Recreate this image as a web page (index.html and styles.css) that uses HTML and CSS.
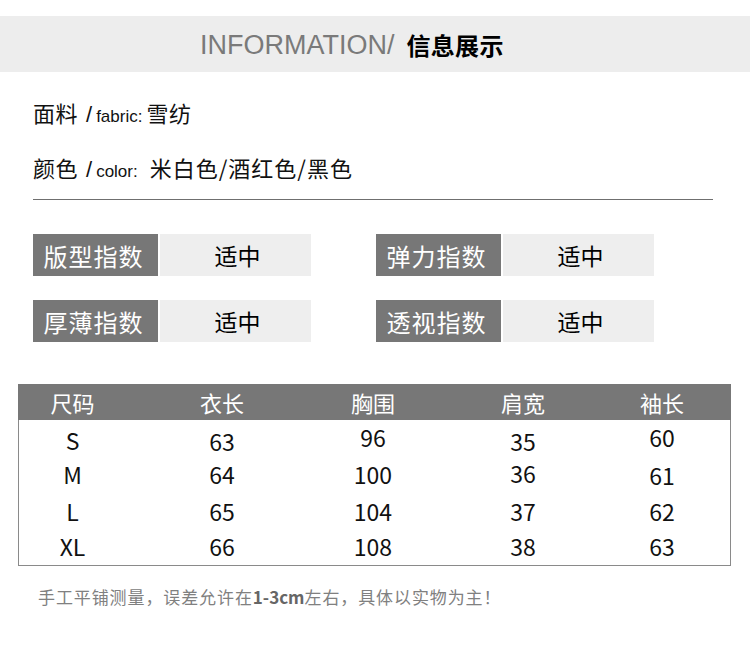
FILE: index.html
```html
<!DOCTYPE html>
<html lang="zh">
<head>
<meta charset="utf-8">
<title>INFORMATION</title>
<link rel="stylesheet" href="styles.css">
</head>
<body>
<div class="banner">
  <span class="banner-en">INFORMATION/</span>
  <span class="banner-cn">信息展示</span>
</div>

<div class="specs">
  <div class="spec-line"><span class="cn">面料</span><span class="slash">/</span><span class="en">fabric:</span><span class="cn">雪纺</span></div>
  <div class="spec-line second"><span class="cn">颜色</span><span class="slash">/</span><span class="en">color:</span><span class="cn gap">米白色/酒红色/黑色</span></div>
</div>

<div class="rule"></div>

<div class="indices">
  <div class="index"><div class="idx-label">版型指数</div><div class="idx-value">适中</div></div>
  <div class="index"><div class="idx-label">弹力指数</div><div class="idx-value">适中</div></div>
  <div class="index"><div class="idx-label">厚薄指数</div><div class="idx-value">适中</div></div>
  <div class="index"><div class="idx-label">透视指数</div><div class="idx-value">适中</div></div>
</div>

<div class="size-table">
  <div class="trow thead">
    <div>尺码</div><div>衣长</div><div>胸围</div><div>肩宽</div><div>袖长</div>
  </div>
  <div class="tbody">
    <div class="trow r1">
      <div>S</div><div class="dn">63</div><div class="up">96</div><div class="dn">35</div><div class="up">60</div>
    </div>
    <div class="trow r2">
      <div>M</div><div>64</div><div>100</div><div class="up1">36</div><div class="dn">61</div>
    </div>
    <div class="trow r3">
      <div>L</div><div>65</div><div>104</div><div>37</div><div>62</div>
    </div>
    <div class="trow r4">
      <div>XL</div><div>66</div><div>108</div><div>38</div><div>63</div>
    </div>
  </div>
</div>

<p class="note">手工平铺测量，误差允许在<b>1-3cm</b>左右，具体以实物为主！</p>
</body>
</html>
```

FILE: styles.css
```css
* { box-sizing: border-box; }

body {
  margin: 0;
  width: 750px;
  background: #ffffff;
  font-family: "Noto Sans CJK SC", "Liberation Sans", sans-serif;
  color: #111111;
}

.banner {
  margin-top: 16px;
  height: 56px;
  background: #ededed;
  display: flex;
  align-items: center;
  padding-left: 200px;
  padding-top: 2px;
}

.banner-en {
  font-family: "Liberation Sans", Arial, sans-serif;
  font-size: 27px;
  color: #7a7a7a;
  letter-spacing: 0;
  line-height: 1;
}

.banner-cn {
  margin-left: 12px;
  font-family: "Noto Sans CJK SC", sans-serif;
  font-weight: 700;
  font-size: 24px;
  letter-spacing: 0.3px;
  color: #000000;
  line-height: 1;
}

.specs {
  padding: 0 33px;
  margin-top: 25px;
}

.spec-line {
  display: flex;
  align-items: baseline;
  height: 30px;
  line-height: 30px;
}

.spec-line.second { margin-top: 25px; }

.spec-line .cn {
  font-size: 22px;
  color: #111111;
  letter-spacing: 0.5px;
}

.spec-line .cn.gap { margin-left: 8px; letter-spacing: 1px; }

.spec-line .slash {
  font-family: "Liberation Sans", Arial, sans-serif;
  font-size: 22px;
  margin: 0 4px 0 8px;
}

.spec-line .en {
  font-family: "Liberation Sans", Arial, sans-serif;
  font-size: 17px;
  margin-right: 4px;
}

.rule {
  margin: 17px 37px 0 33px;
  height: 1px;
  background: #6f6f6f;
}

.indices {
  margin: 34px 0 0 33px;
  display: grid;
  grid-template-columns: 278px 278px;
  column-gap: 65px;
  row-gap: 24px;
}

.index {
  display: flex;
  gap: 2px;
  height: 42px;
}

.idx-label {
  width: 125px;
  background: #777777;
  color: #ffffff;
  font-size: 24px;
  letter-spacing: 1px;
  display: flex;
  align-items: center;
  justify-content: center;
  padding-right: 4px;
}

.idx-value {
  width: 151px;
  background: #eeeeee;
  color: #000000;
  font-size: 23px;
  display: flex;
  align-items: center;
  justify-content: center;
  padding-left: 4px;
}

.size-table {
  margin: 42px 19px 0 18px;
  border: 1px solid #8a8a8a;
  border-top: none;
}

.trow {
  display: grid;
  grid-template-columns: 107px 192px 110px 190px 88px 1fr;
}

.trow > div {
  text-align: center;
  display: flex;
  align-items: center;
  justify-content: center;
}

.thead {
  height: 36px;
  background: #777777;
  color: #ffffff;
  font-size: 22px;
  margin: 0 -1px;
  padding-left: 1px;
}

.tbody {
  padding-top: 4px;
  height: 145px;
}

.tbody .trow {
  font-size: 23px;
  color: #111111;
}

.tbody .r1 { height: 33px; }
.tbody .r2 { height: 34px; }
.tbody .r3 { height: 40px; }
.tbody .r4 { height: 31px; }

.tbody .trow > div { line-height: 1; }

.tbody .up { padding-bottom: 7px; }
.tbody .up1 { padding-bottom: 2px; }
.tbody .dn { padding-top: 2px; }

.note {
  margin: 19px 0 0 38px;
  font-size: 17px;
  line-height: 24px;
  color: #808080;
  letter-spacing: 0.9px;
}

.note b {
  color: #666666;
  font-weight: 700;
  letter-spacing: 0;
}
```
